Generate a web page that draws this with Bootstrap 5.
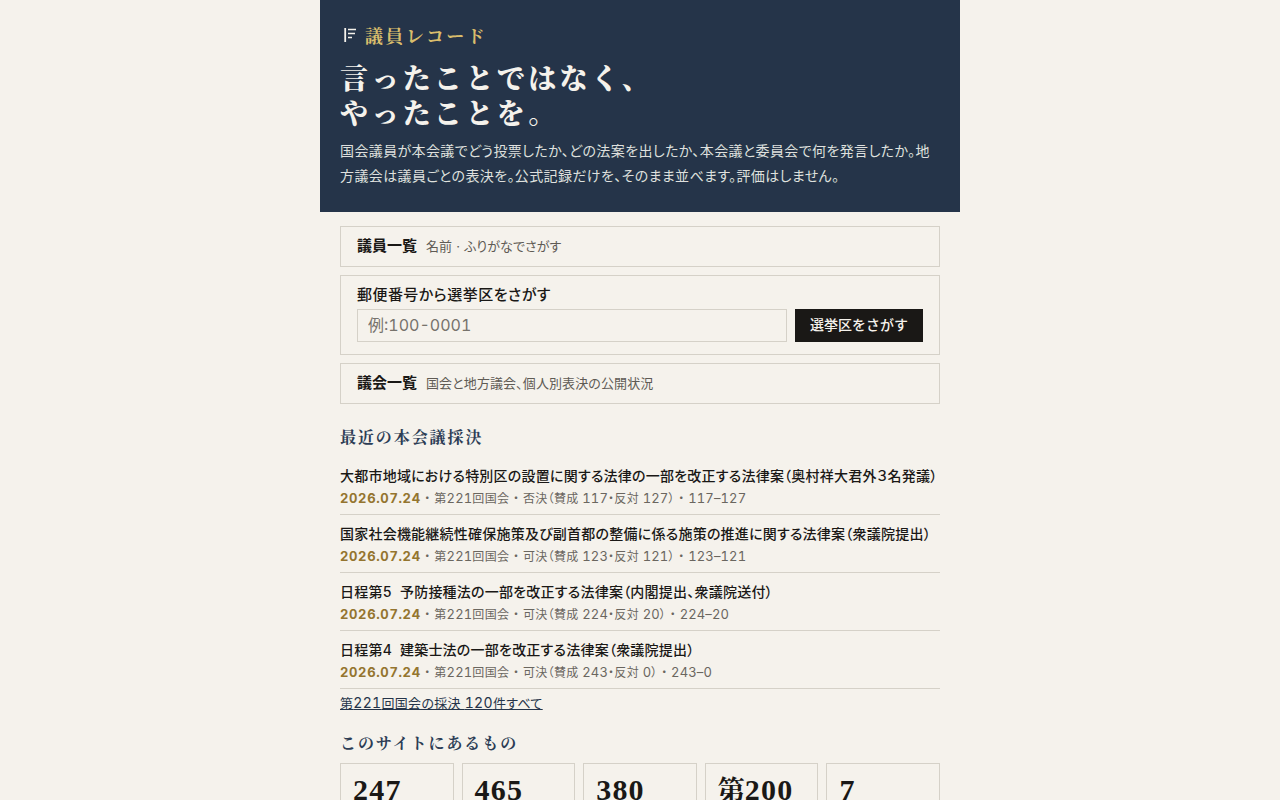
<!DOCTYPE html>
<html lang="ja">
<head>
<meta charset="utf-8">
<title>議員レコード</title>
<link href="https://cdn.jsdelivr.net/npm/bootstrap@5.3.0/dist/css/bootstrap.min.css" rel="stylesheet">
<style>
body{background:#f5f2ec;color:#1a1816;font-family:Inter,"Noto Sans CJK JP",sans-serif;font-size:14px;font-feature-settings:"palt","tnum";letter-spacing:.016em}
.page-wrap{width:640px;margin:0 auto}
.hero{background:#253449;color:#f5f2ec;padding:23px 20px 22px;height:212px}
.brand{color:#d9bd6c;font-family:"Noto Serif CJK JP","DejaVu Serif",serif;font-size:18px;line-height:24px;letter-spacing:.13em;font-weight:700;font-feature-settings:normal}
.brand svg{margin-left:4px;margin-right:1px}
.hero h1{font-family:"Noto Serif CJK JP","DejaVu Serif",serif;font-size:28px;line-height:35px;letter-spacing:.12em;font-weight:900;margin:13px 0 8px;font-feature-settings:normal}
.hero p{font-size:14px;line-height:25px;color:#dfe0de;margin:0;letter-spacing:.027em}
.body-wrap{padding:14px 20px 0}
.box{border:1px solid #d5d1c8;padding:8px 16px;margin-bottom:8px;height:41px}
.box b{font-size:15px;font-weight:700;margin-right:9px;letter-spacing:0}
.box span{font-size:13px;color:#5f5b55;letter-spacing:.008em}
.box .dotgap{margin:0 4px}
.zip{height:80px;padding:8px 16px}
.zip label{display:block;font-size:15px;font-weight:500;line-height:21px;margin-bottom:4px;letter-spacing:.03em}
.zip input{flex:1;height:33px;border:1px solid #d5d1c8;background:transparent;padding:0 10px 2px;font:16px Inter,"Noto Sans CJK JP",sans-serif;letter-spacing:0;font-feature-settings:"palt","tnum"}
.zip input::placeholder{color:#77736c;opacity:1}
.zip button{height:33px;width:128px;background:#1a1816;color:#f5f2ec;border:0;font-size:14px;font-weight:500;padding:0 0 2px}
.sect{font-family:"Noto Serif CJK JP","DejaVu Serif",serif;color:#2c3d55;font-size:16px;font-weight:700;letter-spacing:.12em;line-height:24px;margin:0;font-feature-settings:normal}
.sect-a{margin-top:21px;margin-bottom:8px}
.sect-b{margin-top:14px;margin-bottom:8px}
.vote{border-bottom:1px solid #d5d1c8;height:58px;padding-top:8px}
.vt{font-size:14px;font-weight:500;line-height:22px;white-space:nowrap}
.vm{font-size:12px;line-height:22px;color:#6a665f;white-space:nowrap;letter-spacing:.03em}
.vm b{color:#94752f;font-size:13px;font-weight:700;letter-spacing:.05em}
.vm i{font-style:normal;font-size:13px;letter-spacing:.01em}
.all{color:#253449;font-size:13px;line-height:28px;display:block;text-decoration:underline;letter-spacing:.024em}
.all i{font-style:normal;font-size:14px}
.stats{display:grid;grid-template-columns:repeat(5,1fr);gap:8px}
.stat{border:1px solid #d5d1c8;padding:6px 12px 12px;height:96px}
.stat b{font-family:"Liberation Serif","Noto Serif CJK JP",serif;font-size:30px;line-height:40px;font-weight:700;letter-spacing:1.2px;display:block;white-space:nowrap;font-feature-settings:normal}
.stat b span{font-size:27px;letter-spacing:0}
</style>
</head>
<body>
<div class="page-wrap">
<header class="hero">
<div class="brand d-flex align-items-center gap-2"><svg width="12" height="14" viewBox="0 0 12 14" fill="none" stroke="#f5f2ec" stroke-width="1.3"><path stroke-width="1.8" d="M1.2 0v14"/><path d="M4 1.5h8M4 5.5h7M4 9.5h4"/></svg><span>議員レコード</span></div>
<h1>言ったことではなく、<br>やったことを。</h1>
<p>国会議員が本会議でどう投票したか、どの法案を出したか、本会議と委員会で何を発言したか。地方議会は議員ごとの表決を。公式記録だけを、そのまま並べます。評価はしません。</p>
</header>
<main class="body-wrap">
<div class="box"><b>議員一覧</b><span>名前<span class="dotgap">·</span>ふりがなでさがす</span></div>
<div class="box zip"><label for="z">郵便番号から選挙区をさがす</label><div class="d-flex gap-2"><input id="z" placeholder="例:100-0001"><button>選挙区をさがす</button></div></div>
<div class="box"><b>議会一覧</b><span>国会と地方議会、個人別表決の公開状況</span></div>
<h2 class="sect sect-a">最近の本会議採決</h2>
<div class="vote"><div class="vt">大都市地域における特別区の設置に関する法律の一部を改正する法律案（奥村祥大君外３名発議）</div><div class="vm"><b>2026.07.24</b> ・ 第<i>221</i>回国会 ・ 否決（賛成 <i>117</i>・反対 <i>127</i>） ・ <i>117–127</i></div></div>
<div class="vote"><div class="vt">国家社会機能継続性確保施策及び副首都の整備に係る施策の推進に関する法律案（衆議院提出）</div><div class="vm"><b>2026.07.24</b> ・ 第<i>221</i>回国会 ・ 可決（賛成 <i>123</i>・反対 <i>121</i>） ・ <i>123–121</i></div></div>
<div class="vote"><div class="vt">日程第5&nbsp;&nbsp;予防接種法の一部を改正する法律案（内閣提出、衆議院送付）</div><div class="vm"><b>2026.07.24</b> ・ 第<i>221</i>回国会 ・ 可決（賛成 <i>224</i>・反対 <i>20</i>） ・ <i>224–20</i></div></div>
<div class="vote"><div class="vt">日程第4&nbsp;&nbsp;建築士法の一部を改正する法律案（衆議院提出）</div><div class="vm"><b>2026.07.24</b> ・ 第<i>221</i>回国会 ・ 可決（賛成 <i>243</i>・反対 <i>0</i>） ・ <i>243–0</i></div></div>
<a class="all" href="#">第<i>221</i>回国会の採決 <i>120</i>件すべて</a>
<h2 class="sect sect-b">このサイトにあるもの</h2>
<div class="stats"><div class="stat"><b>247</b></div><div class="stat"><b>465</b></div><div class="stat"><b>380</b></div><div class="stat"><b><span>第</span>200</b></div><div class="stat"><b>7</b></div></div>
</main>
</div>
</body>
</html>
